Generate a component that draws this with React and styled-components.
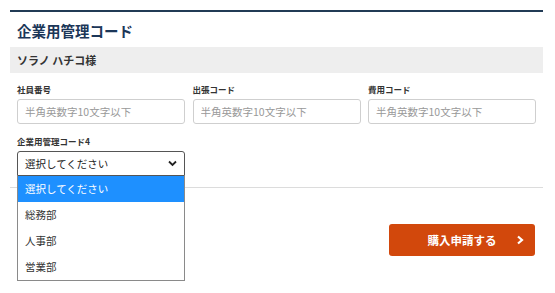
import React from "react";
import styled, { createGlobalStyle } from "styled-components";

const GlobalStyle = createGlobalStyle`
  body {
    margin: 0;
    background: #fff;
    font-family: "Noto Sans CJK JP", "Noto Sans", sans-serif;
    color: #333;
  }
`;

const Page = styled.div`
  box-sizing: border-box;
  min-height: 293px;
  padding: 10px 12px 0 10px;
`;

const Section = styled.section`
  border-top: 2px solid #213b55;
`;

const Title = styled.h2`
  margin: 0;
  padding: 9px 0 0 7px;
  height: 35px;
  box-sizing: border-box;
  font-size: 14.5px;
  line-height: 20px;
  font-weight: 700;
  color: #1b3658;
`;

const NameBar = styled.div`
  height: 26px;
  background: #eeeeee;
  padding-left: 7px;
  display: flex;
  align-items: center;
  font-size: 11px;
  font-weight: 700;
  color: #333;
`;

const Fields = styled.div`
  display: grid;
  grid-template-columns: repeat(3, 168px);
  column-gap: 7.5px;
  padding: 9px 0 0 7px;
`;

const Field = styled.div`
  display: flex;
  flex-direction: column;
`;

const Label = styled.label`
  display: block;
  font-size: 8.5px;
  font-weight: 700;
  line-height: 14px;
  height: 17px;
  color: #333;
`;

const Input = styled.input`
  box-sizing: border-box;
  height: 25px;
  border: 1px solid #cfcfcf;
  border-radius: 3px;
  padding: 0 7px;
  font-family: inherit;
  font-size: 10.5px;
  color: #333;
  outline: none;
  &::placeholder {
    color: #999;
  }
`;

const SelectField = styled.div`
  position: relative;
  width: 168px;
  margin: 10px 0 0 7px;
`;

const SelectBox = styled.div`
  box-sizing: border-box;
  height: 25px;
  border: 1px solid #555;
  border-radius: 3px 3px 0 0;
  padding: 0 7px;
  display: flex;
  align-items: center;
  justify-content: space-between;
  font-size: 10.5px;
  color: #222;
`;

const Options = styled.ul`
  position: absolute;
  left: 0;
  top: 42px;
  width: 168px;
  box-sizing: border-box;
  margin: 0;
  padding: 0;
  list-style: none;
  background: #fff;
  border: 1px solid #8a8a8a;
  border-top: none;
  z-index: 2;
`;

const Option = styled.li`
  height: 26px;
  line-height: 26px;
  padding-left: 7px;
  font-size: 10.5px;
  color: ${(p) => (p.$active ? "#fff" : "#333")};
  background: ${(p) => (p.$active ? "#1e90ff" : "transparent")};
`;

const Divider = styled.hr`
  margin: 11px 0 0;
  border: none;
  border-top: 1px solid #dcdcdc;
`;

const Footer = styled.div`
  display: flex;
  justify-content: flex-end;
  padding: 36px 8px 0 0;
`;

const SubmitButton = styled.button`
  width: 146px;
  height: 32px;
  border: none;
  border-radius: 3px;
  background: #d2480c;
  color: #fff;
  font-family: inherit;
  font-size: 11.5px;
  font-weight: 700;
  display: flex;
  align-items: center;
  justify-content: center;
  position: relative;
  padding: 0;
  svg {
    position: absolute;
    right: 10px;
    top: 11px;
  }
`;

const Chevron = ({ size = 10 }) => (
  <svg width={size} height={size} viewBox="0 0 10 10">
    <path d="M3 1.5 L7 5 L3 8.5" fill="none" stroke="#fff" strokeWidth="2.2" />
  </svg>
);

const DownArrow = () => (
  <svg width="9" height="7" viewBox="0 0 9 7">
    <path d="M1 1.5 L4.5 5 L8 1.5" fill="none" stroke="#222" strokeWidth="1.8" />
  </svg>
);

const fields = [
  { label: "社員番号" },
  { label: "出張コード" },
  { label: "費用コード" },
];

const options = ["選択してください", "総務部", "人事部", "営業部"];

export default function App() {
  return (
    <Page>
      <GlobalStyle />
      <Section>
        <Title>企業用管理コード</Title>
        <NameBar>ソラノ ハチコ様</NameBar>
        <Fields>
          {fields.map((f) => (
            <Field key={f.label}>
              <Label>{f.label}</Label>
              <Input placeholder="半角英数字10文字以下" />
            </Field>
          ))}
        </Fields>
        <SelectField>
          <Label>企業用管理コード4</Label>
          <SelectBox>
            <span>選択してください</span>
            <DownArrow />
          </SelectBox>
          <Options>
            {options.map((o, i) => (
              <Option key={o} $active={i === 0}>
                {o}
              </Option>
            ))}
          </Options>
        </SelectField>
        <Divider />
        <Footer>
          <SubmitButton>
            購入申請する
            <Chevron />
          </SubmitButton>
        </Footer>
      </Section>
    </Page>
  );
}
